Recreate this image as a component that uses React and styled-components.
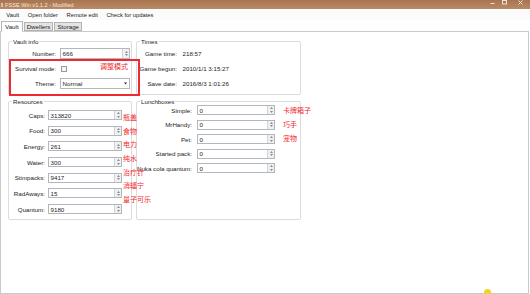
import React from "react";
import styled, { createGlobalStyle } from "styled-components";

const Global = createGlobalStyle`
  html, body { margin: 0; padding: 0; background: #fff; }
  body { font-family: "Liberation Sans", Arial, sans-serif; }
  #root { width: 530px; height: 294px; }
`;

const Window = styled.div`
  position: relative;
  width: 530px;
  height: 294px;
  display: flex;
  flex-direction: column;
  overflow: hidden;
  background: #fff;
  color: #1c1c1c;
  font-size: 6.2px;
`;

const TitleBar = styled.div`
  height: 9px;
  flex: none;
  display: flex;
  align-items: center;
  gap: 2px;
  padding-left: 1px;
  background: linear-gradient(#a97450, #b88a67);
  color: #f3e4d8;
  font-size: 5.6px;
`;

const AppIcon = styled.span`
  width: 2px;
  height: 4px;
  background: #d9c0ad;
`;

const WinControls = styled.div`
  margin-left: auto;
  display: flex;
  align-items: flex-start;
  height: 100%;
  padding-right: 7px;
  gap: 7px;
`;

const MenuBar = styled.div`
  height: 11px;
  flex: none;
  display: flex;
  align-items: center;
  padding-left: 2px;
  background: #fbfbfb;
  font-size: 5.8px;
`;

const MenuItem = styled.span`
  padding: 0 4.3px;
`;

const TabStrip = styled.div`
  height: 11px;
  flex: none;
  display: flex;
  align-items: flex-end;
  padding-left: 1px;
  background: #fff;
  position: relative;
  z-index: 1;
`;

const Tab = styled.div`
  height: ${(p) => (p.$active ? 11 : 9)}px;
  margin-bottom: ${(p) => (p.$active ? -1 : 0)}px;
  padding: 0 ${(p) => (p.$active ? 3 : 2)}px;
  margin-right: 1px;
  display: flex;
  align-items: center;
  box-sizing: border-box;
  border: 1px solid #b4b4b4;
  border-bottom-color: ${(p) => (p.$active ? "#fff" : "#b4b4b4")};
  background: ${(p) => (p.$active ? "#fff" : "#e4e4e4")};
  font-size: 6.2px;
`;

const TabPage = styled.div`
  flex: 1;
  margin-right: 1px;
  border: 1px solid #cacaca;
  padding: 9px 0 0 7px;
  display: grid;
  grid-template-columns: 124px 165px;
  grid-template-rows: 54px 119px;
  column-gap: 4px;
  row-gap: 6px;
  align-content: start;
`;

const Group = styled.div`
  position: relative;
  border: 1px solid #dcdcdc;
  border-radius: 2px;
  padding-top: ${(p) => p.$top}px;
  display: flex;
  flex-direction: column;
  gap: ${(p) => p.$gap}px;
`;

const GroupTitle = styled.span`
  position: absolute;
  top: -4px;
  left: 3px;
  padding: 0 1px;
  background: #fff;
  line-height: 7px;
  font-size: 6.2px;
`;

const Row = styled.div`
  height: ${(p) => p.$h}px;
  display: grid;
  grid-template-columns: ${(p) => p.$label}px ${(p) => p.$field}px;
  column-gap: ${(p) => p.$gap}px;
  align-items: center;
`;

const Label = styled.span`
  display: flex;
  justify-content: flex-end;
  white-space: nowrap;
  min-width: 0;
`;

const Field = styled.div`
  height: 100%;
  box-sizing: border-box;
  border: 1px solid #b2b6bd;
  background: #fff;
  display: flex;
  align-items: center;
`;

const Value = styled.span`
  flex: 1;
  padding-left: 1.5px;
  white-space: nowrap;
`;

const Spinner = styled.div`
  width: 7px;
  height: 100%;
  box-sizing: border-box;
  border-left: 1px solid #d2d4d8;
  background: #eff0f2;
  display: flex;
  flex-direction: column;
  align-items: center;
  justify-content: space-evenly;
`;

const Check = styled.span`
  width: 6px;
  height: 6px;
  box-sizing: border-box;
  border: 1px solid #9a9a9a;
  background: #f5f5f5;
  margin-left: 1px;
`;

const Note = styled.span`
  position: absolute;
  left: ${(p) => p.$x}px;
  top: ${(p) => p.$y}px;
  color: #f0282c;
  font-family: "Noto Sans CJK SC", sans-serif;
  font-size: 7px;
  line-height: 8px;
  white-space: nowrap;
`;

const NoteColumn = styled.div`
  position: absolute;
  left: ${(p) => p.$x}px;
  top: ${(p) => p.$y}px;
  display: flex;
  flex-direction: column;
  gap: ${(p) => p.$gap}px;
  color: #f0282c;
  font-family: "Noto Sans CJK SC", sans-serif;
  font-size: 7px;
  line-height: 8px;
  white-space: nowrap;
`;

const RedBox = styled.div`
  position: absolute;
  left: 9px;
  top: 59px;
  width: 131px;
  height: 37px;
  box-sizing: border-box;
  border: 2px solid #ec2a2f;
`;

const Dot = styled.span`
  position: absolute;
  left: 484px;
  top: 289px;
  width: 7px;
  height: 7px;
  border-radius: 50%;
  background: #f1d32c;
`;

const Arrow = ({ up }) => (
  <svg width="3" height="2" viewBox="0 0 3 2">
    <path d={up ? "M0 2 L1.5 0 L3 2Z" : "M0 0 L1.5 2 L3 0Z"} fill="#8a8d92" />
  </svg>
);

const NumberBox = ({ value }) => (
  <Field>
    <Value>{value}</Value>
    <Spinner>
      <Arrow up />
      <Arrow />
    </Spinner>
  </Field>
);

const resources = [
  ["Caps:", "313820"],
  ["Food:", "300"],
  ["Energy:", "261"],
  ["Water:", "300"],
  ["Stimpacks:", "9417"],
  ["RadAways:", "15"],
  ["Quantum:", "9180"],
];

const lunchboxes = [
  ["Simple:", "0"],
  ["MrHandy:", "0"],
  ["Pet:", "0"],
  ["Started pack:", "0"],
  ["Nuka cola quantum:", "0"],
];

const times = [
  ["Game time:", "218:57"],
  ["Game begun:", "2010/1/1 3:15:27"],
  ["Save date:", "2016/8/3 1:01:26"],
];

export default function App() {
  return (
    <Window>
      <Global />
      <TitleBar>
        <AppIcon />
        <span>FSSE Win v1.1.2 - Modified</span>
        <WinControls>
          <svg width="5" height="5" viewBox="0 0 5 5">
            <rect x="0.5" y="3" width="4" height="1" fill="#f1e2d6" />
          </svg>
          <svg width="5" height="5" viewBox="0 0 5 5">
            <rect x="0.5" y="0.5" width="4" height="3.5" fill="none" stroke="#f1e2d6" strokeWidth="1" />
          </svg>
          <svg width="5" height="5" viewBox="0 0 5 5" style={{ marginLeft: 4 }}>
            <path d="M0.5 0.5 L4.5 4.5 M4.5 0.5 L0.5 4.5" stroke="#f1e2d6" strokeWidth="1" />
          </svg>
        </WinControls>
      </TitleBar>
      <MenuBar>
        <MenuItem>Vault</MenuItem>
        <MenuItem>Open folder</MenuItem>
        <MenuItem>Remote edit</MenuItem>
        <MenuItem>Check for updates</MenuItem>
      </MenuBar>
      <TabStrip>
        <Tab $active>Vault</Tab>
        <Tab>Dwellers</Tab>
        <Tab>Storage</Tab>
      </TabStrip>
      <TabPage>
        <Group $top={6} $gap={4}>
          <GroupTitle>Vault info</GroupTitle>
          <Row $h={11} $label={47} $field={70} $gap={4}>
            <Label>Number:</Label>
            <NumberBox value="666" />
          </Row>
          <Row $h={11} $label={47} $field={70} $gap={4}>
            <Label>Survival mode:</Label>
            <Check />
          </Row>
          <Row $h={11} $label={47} $field={70} $gap={4}>
            <Label>Theme:</Label>
            <Field>
              <Value>Normal</Value>
              <svg width="7" height="3" viewBox="0 0 7 3">
                <path d="M2 0.5 L5 0.5 L3.5 2.5Z" fill="#222" />
              </svg>
            </Field>
          </Row>
        </Group>
        <Group $top={6} $gap={4}>
          <GroupTitle>Times</GroupTitle>
          {times.map(([l, v]) => (
            <Row key={l} $h={11} $label={40} $field={110} $gap={4}>
              <Label>{l}</Label>
              <Value>{v}</Value>
            </Row>
          ))}
        </Group>
        <Group $top={8} $gap={5.7}>
          <GroupTitle>Resources</GroupTitle>
          {resources.map(([l, v]) => (
            <Row key={l} $h={10} $label={36} $field={74} $gap={3}>
              <Label>{l}</Label>
              <NumberBox value={v} />
            </Row>
          ))}
        </Group>
        <Group $top={3} $gap={4.5}>
          <GroupTitle>Lunchboxes</GroupTitle>
          {lunchboxes.map(([l, v]) => (
            <Row key={l} $h={10} $label={55} $field={78} $gap={5}>
              <Label>{l}</Label>
              <NumberBox value={v} />
            </Row>
          ))}
        </Group>
      </TabPage>

      <RedBox />
      <Note $x={100} $y={62}>调整模式</Note>
      <NoteColumn $x={123} $y={113} $gap={5.7}>
        <span>瓶盖</span>
        <span>食物</span>
        <span>电力</span>
        <span>纯水</span>
        <span>治疗针</span>
        <span>消辐宁</span>
        <span>量子可乐</span>
      </NoteColumn>
      <NoteColumn $x={283} $y={106} $gap={6}>
        <span>卡牌箱子</span>
        <span>巧手</span>
        <span>宠物</span>
      </NoteColumn>
      <Dot />
    </Window>
  );
}
